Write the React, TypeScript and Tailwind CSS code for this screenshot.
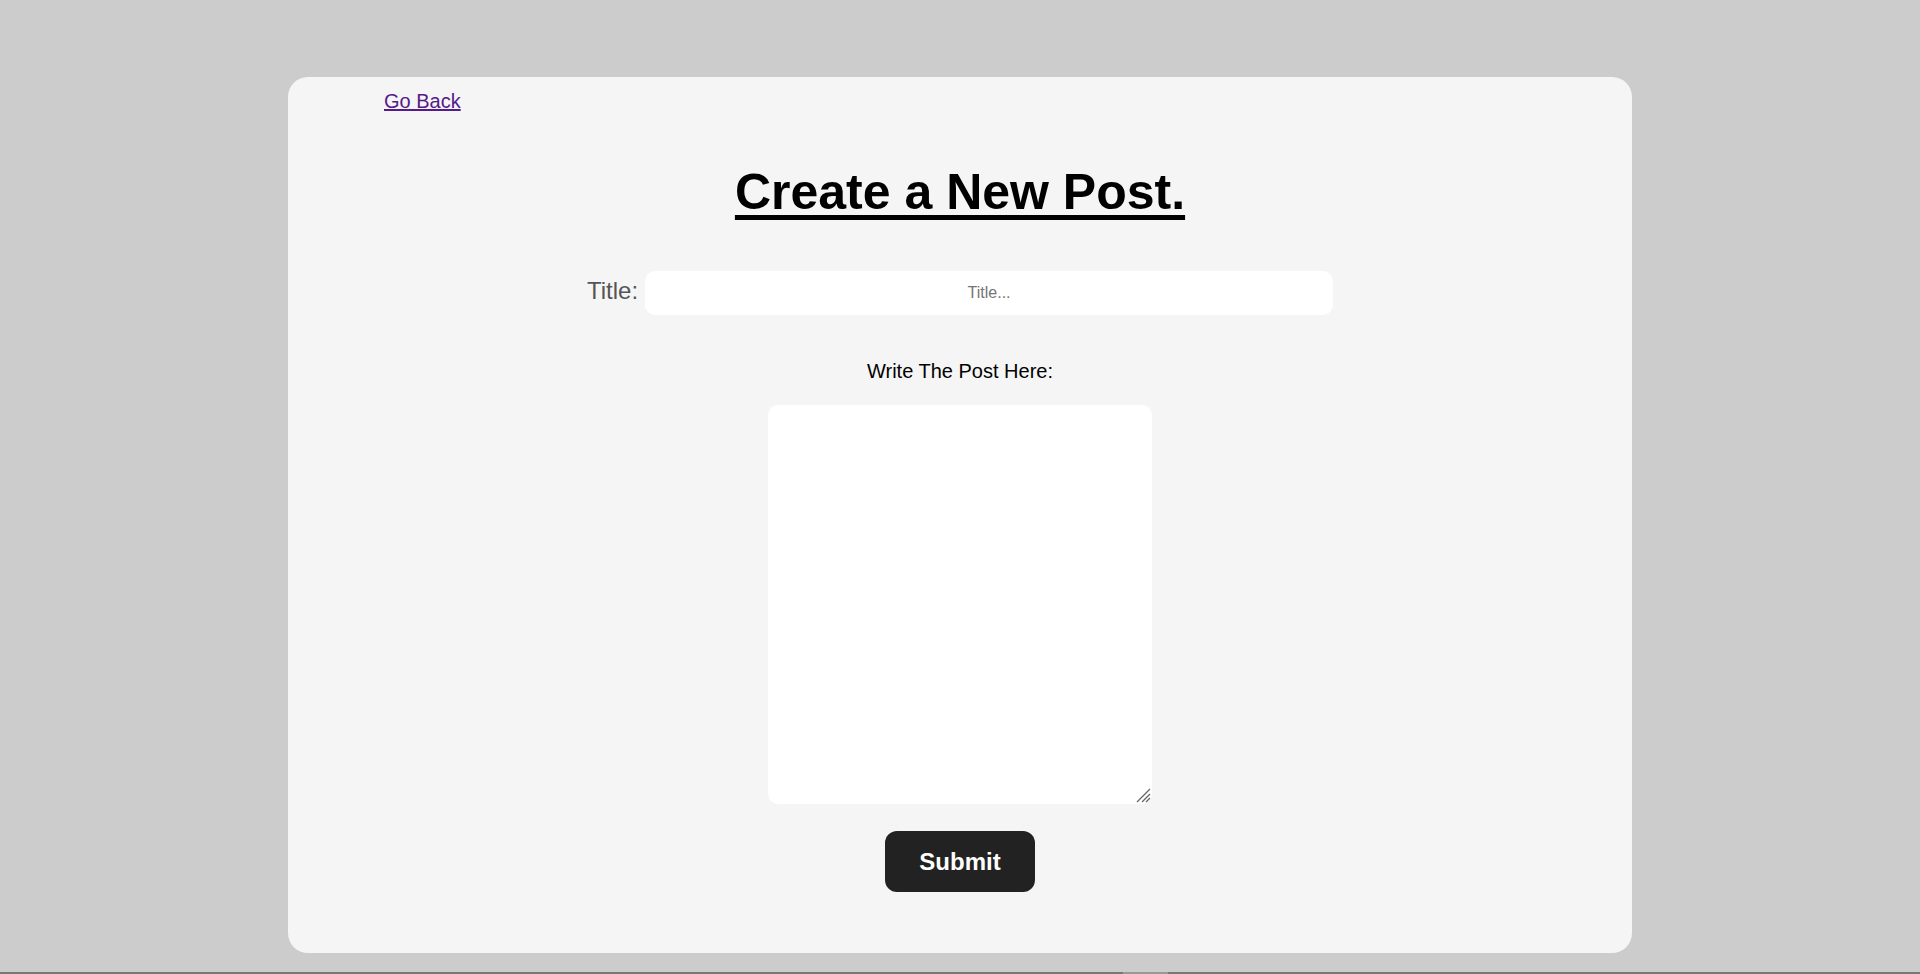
import React from "react";

const App = () => {
  return (
    <div className="flex h-[974px] flex-col bg-[#cccccc] font-['Liberation_Sans',Arial,sans-serif]">
      <div className="flex-1 pt-[77px]">
        <div className="mx-auto flex h-[876px] w-[1344px] flex-col rounded-[20px] bg-[#f5f5f5]">
          <div className="pl-[96px] pt-[13px]">
            <a href="#" className="text-[20px] leading-[23px] text-[#551a8b] underline">
              Go Back
            </a>
          </div>
          <h1 className="mt-[49px] text-center text-[50px] font-bold leading-[57px] text-black underline decoration-[4.5px] underline-offset-[6px]">
            Create a New Post.
          </h1>
          <div className="mt-[50px] flex items-center justify-center">
            <label className="mb-[4px] text-[24px] leading-[28px] text-[#555555]">Title:</label>
            <input
              type="text"
              placeholder="Title..."
              className="ml-[7px] h-[44px] w-[688px] rounded-[10px] bg-white text-center text-[16px] outline-none placeholder:text-[#757575]"
            />
          </div>
          <p className="mt-[45px] text-center text-[20px] leading-[23px] text-black">
            Write The Post Here:
          </p>
          <div className="mt-[22px] flex justify-center">
            <div className="relative">
              <textarea className="block h-[399px] w-[384px] resize-none rounded-[10px] bg-white p-2 text-[16px] outline-none" />
              {/* resize grip */}
              <svg
                className="pointer-events-none absolute bottom-[1px] right-[1px]"
                width="16"
                height="16"
                viewBox="0 0 16 16"
              >
                <path d="M15 2 L2 15 M15 7 L7 15 M15 11 L11 15" stroke="#666666" strokeWidth="1.3" />
              </svg>
            </div>
          </div>
          <div className="mt-[27px] flex justify-center">
            <button className="h-[61px] w-[150px] rounded-[12px] bg-[#222222] text-[24px] font-bold text-white">
              Submit
            </button>
          </div>
        </div>
      </div>
      <div className="flex h-[2px] bg-[#777777]">
        <div className="ml-[1123px] w-[45px] bg-[#999999]" />
      </div>
    </div>
  );
};

export default App;
